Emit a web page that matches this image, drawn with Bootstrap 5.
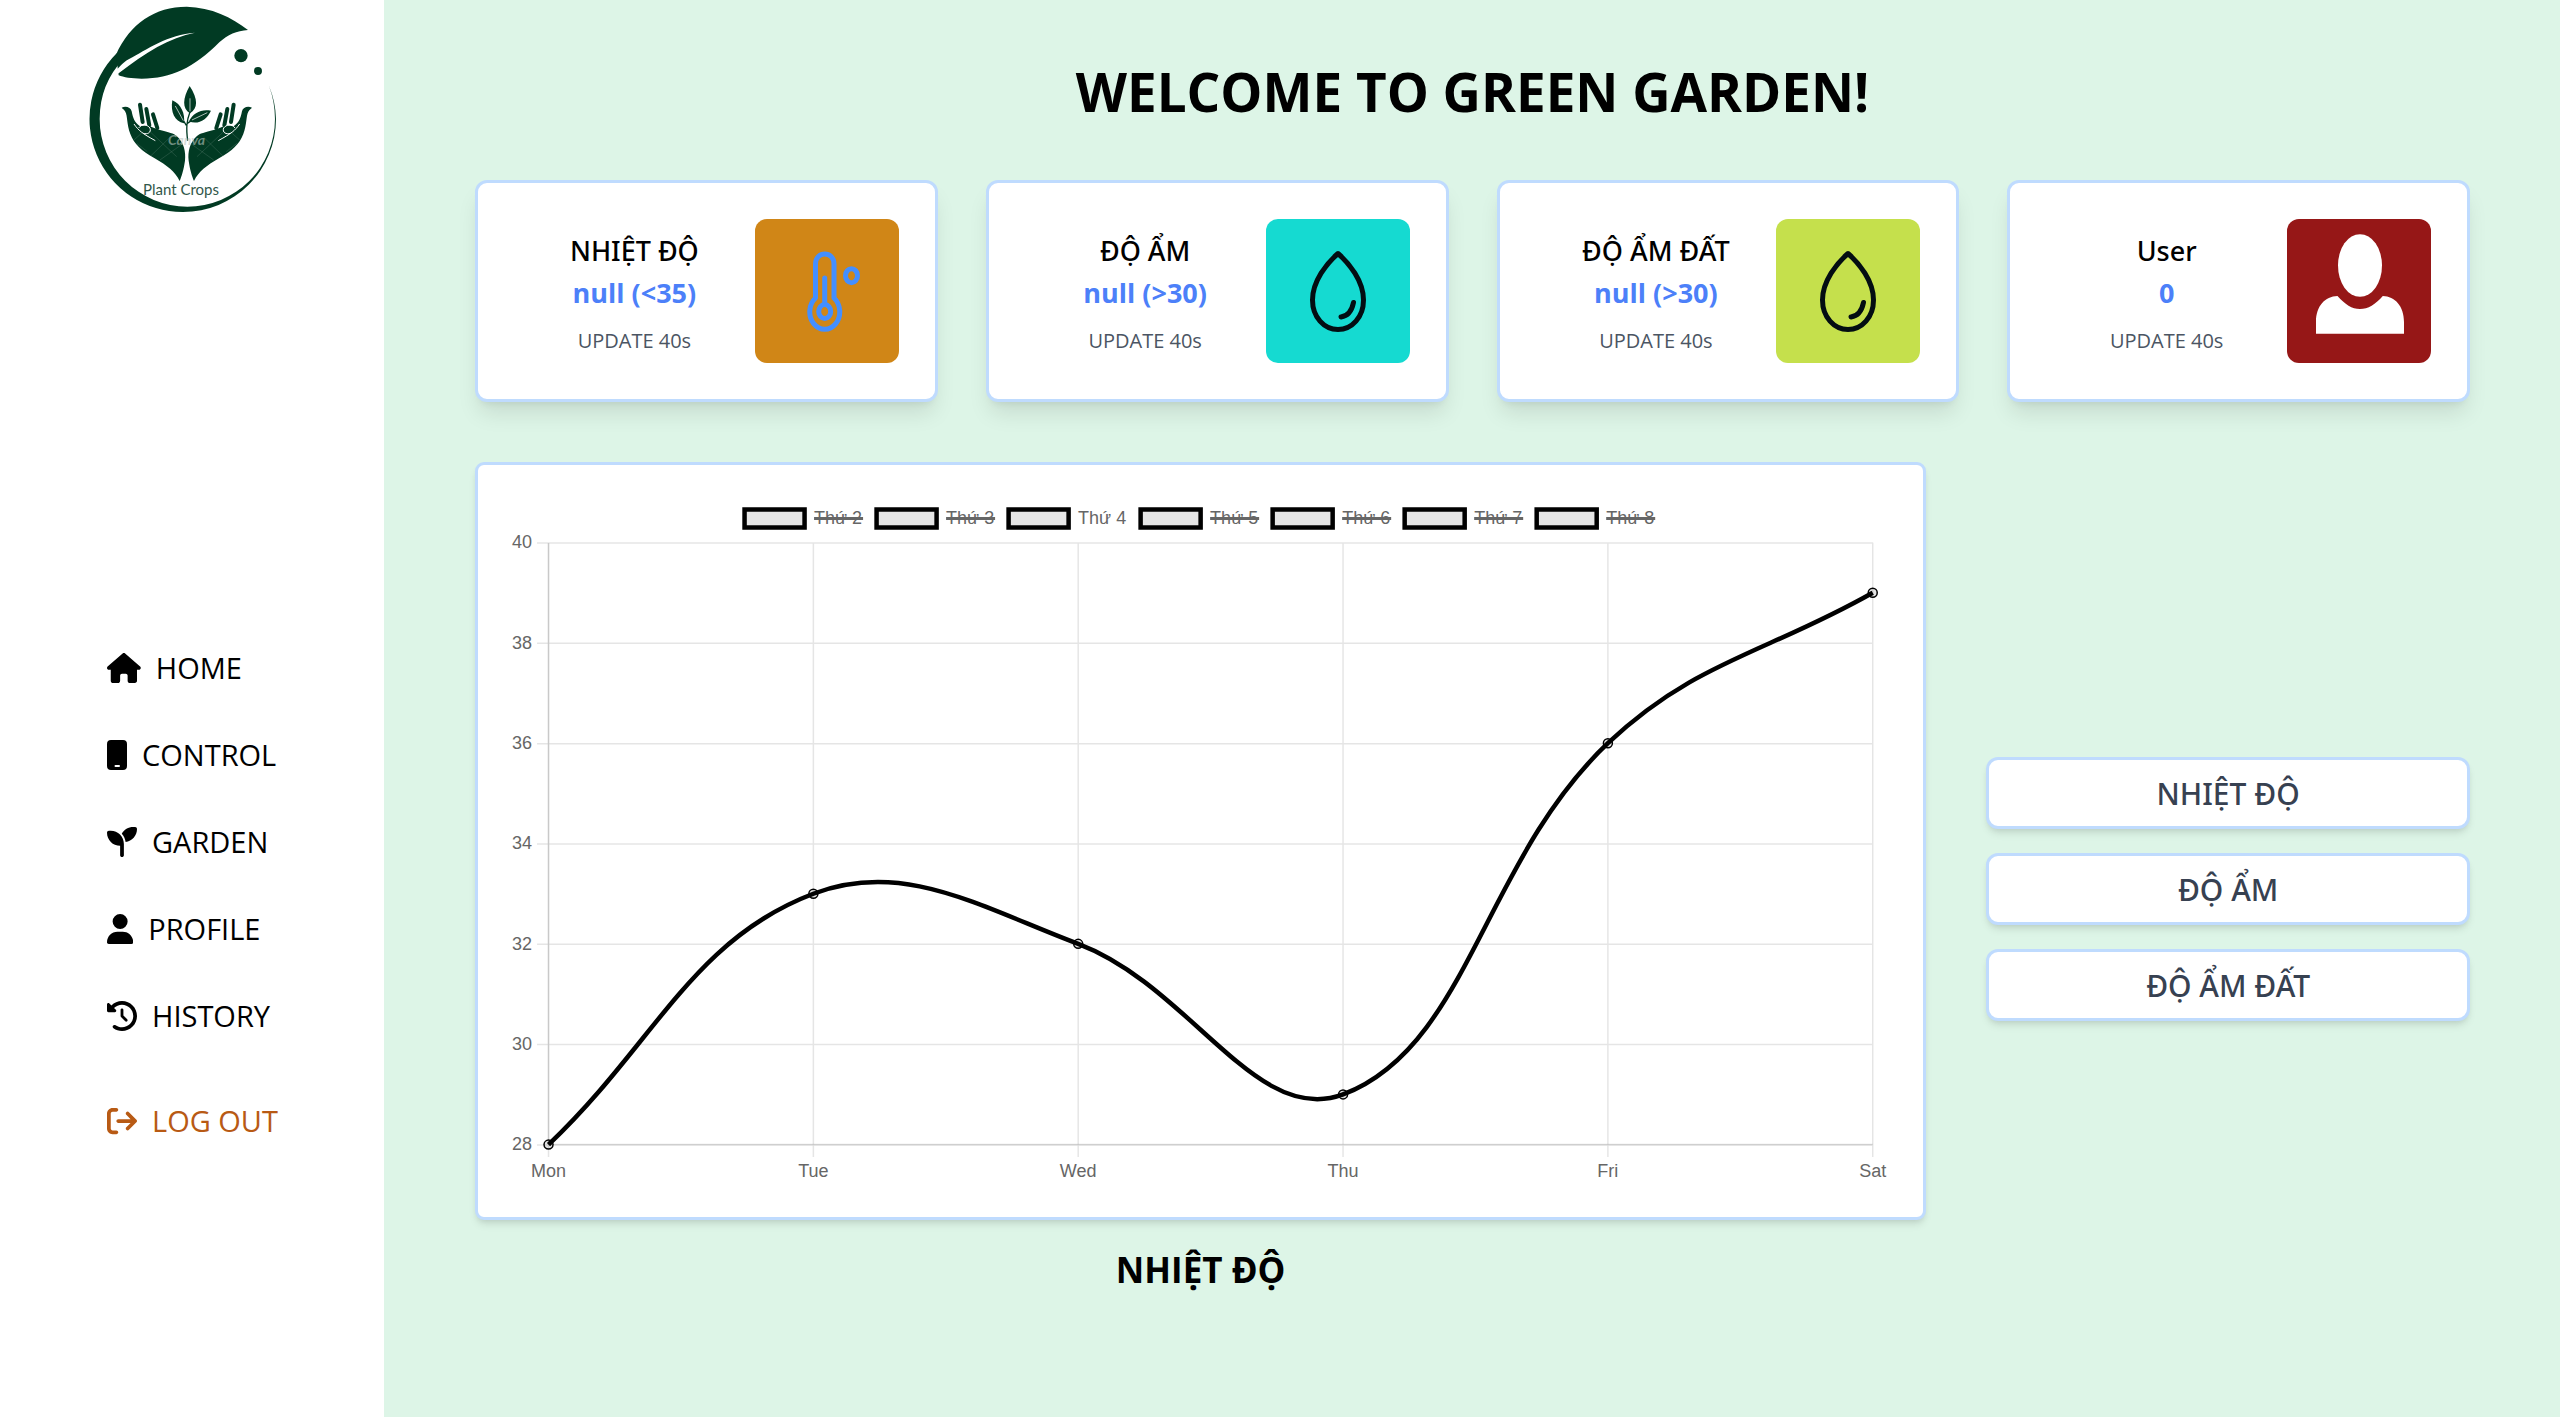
<!DOCTYPE html>
<html lang="vi">
<head>
<meta charset="utf-8">
<meta name="viewport" content="width=device-width, initial-scale=1">
<title>Green Garden</title>
<link href="https://cdn.jsdelivr.net/npm/bootstrap@5.3.0/dist/css/bootstrap.min.css" rel="stylesheet">
<style>
  :root { --edge: #bfdbfe; --mint: #ddf5e7; }
  body { font-family: "Open Sans", "Noto Sans", sans-serif; color: #000; background: var(--mint); }
  .side-panel { width: 15%; }
  .side-logo { width: 260px; height: 230px; margin-left: 60px; }
  .side-menu { margin-top: 415px; padding-left: 107px; gap: 42px; }
  .side-menu a { font-size: 29px; line-height: 45px; gap: 15px; color: #000; }
  .side-menu svg { height: 30px; width: auto; fill: currentColor; }
  .side-menu .exit-item { margin-top: 18px; }
  .side-menu .exit-item a { color: #b85a14; }
  .content-area { padding: 56px 90px 48px 91px; }
  .page-title { font-size: 53px; line-height: 72px; margin-bottom: 52px; }
  .panel { background: #fff; border: 3px solid var(--edge); border-radius: 12px; }
  .stat-row { gap: 48px; margin-bottom: 60px; }
  .stat-box { flex: 1 1 0; padding: 36px; box-shadow: 0 15px 22px -4px rgba(0,0,0,.1), 0 6px 9px -6px rgba(0,0,0,.1); }
  .stat-text { padding-top: 4px; }
  .stat-name, .stat-value { font-size: 27px; line-height: 42px; }
  .stat-name, .switch-btn { font-family: "Noto Sans", "Open Sans", sans-serif; font-weight: 500; }
  .stat-value { color: #4c80f9; }
  .stat-note { font-size: 20px; line-height: 30px; margin-top: 12px; color: #4b5563; }
  .stat-tile { width: 144px; height: 144px; border-radius: 12px; }
  .tile-orange { background: #d08617; }
  .tile-teal { background: #15dad1; }
  .tile-lime { background: #c5e04c; }
  .tile-red { background: #961717; }
  .chart-row { gap: 60px; }
  .chart-col { flex: 3 1 0; }
  .switch-col { flex: 1 1 0; gap: 24px; }
  .chart-panel { padding: 30px; border-radius: 9px; }
  .chart-panel, .switch-btn { box-shadow: 0 6px 9px -2px rgba(0,0,0,.1), 0 3px 6px -3px rgba(0,0,0,.1); }
  .chart-panel svg { font-family: "Liberation Sans", Arial, sans-serif; font-size: 18px; fill: #666; }
  .chart-title { font-size: 35px; line-height: 48px; margin: 26px 0 22px; }
  .switch-btn { height: 72px; font-size: 30px; color: #374151; padding: 2px 0 0; line-height: 42px; }
</style>
<script src="https://cdn.jsdelivr.net/npm/bootstrap@5.3.0/dist/js/bootstrap.bundle.min.js"></script>
</head>
<body>
<div class="d-flex min-vh-100">

  <aside class="side-panel bg-white flex-shrink-0">
    <svg class="side-logo d-block" viewBox="0 0 260 230" role="img" aria-label="Plant Crops">
      <defs>
        <g id="hand">
          <path d="M185 323C198 317 212 322 215 334C219 355 224 368 240 379C262 372 275 383 300 390C325 396 343 401 350 408C372 428 378 455 375 482C371 510 365 528 359 543C345 515 322 497 284 475C244 452 222 432 211 402C200 372 203 347 196 335C193 329 189 327 185 323Z"/>
          <path d="M240 314L248 366M259 327L268 376M279 343L292 384" stroke="#013a23" stroke-width="12" stroke-linecap="round" fill="none"/>
          <path d="M222 372C236 392 246 400 286 422M236 384C246 370 262 374 270 384C275 398 262 404 250 400" stroke="#fff" stroke-width="3" fill="none"/>
          <path d="M222 420L250 395M270 470L330 412M270 395L350 470M300 480L370 430M230 430L262 455" stroke="#fff" stroke-opacity=".18" stroke-width="2" fill="none"/>
        </g>
      </defs>
      <g transform="scale(.3333)" fill="#013a23">
        <path d="M170 160A279 279 0 0 0 369 636A279 279 0 0 0 648 357Q647 305 627 258Q645 305 645 357A263 263 0 0 1 119 357A263 263 0 0 1 190 177Z"/>
        <path d="M168 164C210 70 285 20 380 20C455 22 515 52 564 90C530 92 503 104 478 127C400 204 335 236 245 236C215 236 190 232 176 226Z"/>
        <path d="M405 98C330 112 255 158 176 220L160 226C172 205 188 188 206 178C260 148 325 103 405 98Z" fill="#fff"/>
        <circle cx="543" cy="167" r="20"/><circle cx="594" cy="213" r="12"/>
        <use href="#hand"/>
        <use href="#hand" transform="translate(761 0) scale(-1 1)"/>
        <path d="M389 258C415 298 414 325 390 340C366 325 368 295 389 258ZM337 301C364 312 376 342 372 370C344 364 331 336 337 301ZM453 332C426 326 398 338 387 364C414 375 440 360 453 332Z"/>
        <path d="M390 336C380 362 378 382 383 422M360 345L379 376M420 345L382 370" stroke="#013a23" stroke-width="4" fill="none"/>
        <path d="M390 295V334M346 318L370 362M442 338L396 360" stroke="#fff" stroke-width="2" fill="none"/>
      </g>
      <text x="108" y="145" font-family="Lato, sans-serif" font-style="italic" font-weight="700" font-size="14" fill="#b9c6bf" fill-opacity=".6">Canva</text>
      <text x="83" y="195" font-family="Lato, sans-serif" font-size="15" fill="#31574a">Plant Crops</text>
    </svg>

    <nav aria-label="Menu">
      <ul class="side-menu list-unstyled d-flex flex-column mb-0">
        <li><a href="#" class="d-inline-flex align-items-center text-decoration-none"><svg viewBox="0 0 576 512" aria-hidden="true"><path d="M575.8 255.5c0 18-15 32.1-32 32.1l-32 0 .7 160.2c0 2.7-.2 5.4-.5 8.1l0 16.2c0 22.1-17.9 40-40 40l-16 0c-1.1 0-2.2 0-3.3-.1c-1.4 .1-2.8 .1-4.2 .1L416 512l-24 0c-22.1 0-40-17.9-40-40l0-24 0-64c0-17.7-14.3-32-32-32l-64 0c-17.7 0-32 14.3-32 32l0 64 0 24c0 22.1-17.9 40-40 40l-24 0-31.9 0c-1.5 0-3-.1-4.5-.2c-1.2 .1-2.4 .2-3.6 .2l-16 0c-22.1 0-40-17.9-40-40l0-112c0-.9 0-1.9 .1-2.8l0-69.7-32 0c-18 0-32-14-32-32.1c0-9 3-17 10-24L266.4 8c7-7 15-8 22-8s15 2 21 7L564.8 231.5c8 7 12 15 11 24z"/></svg>HOME</a></li>
        <li><a href="#" class="d-inline-flex align-items-center text-decoration-none"><svg viewBox="0 0 20 30" aria-hidden="true"><path fill-rule="evenodd" d="M4 0H16A4 4 0 0 1 20 4V26A4 4 0 0 1 16 30H4A4 4 0 0 1 0 26V4A4 4 0 0 1 4 0ZM8.500 25A1 1 0 0 0 8.500 27H12A1 1 0 0 0 12 25Z"/></svg>CONTROL</a></li>
        <li><a href="#" class="d-inline-flex align-items-center text-decoration-none"><svg viewBox="0 0 512 512" aria-hidden="true"><path d="M512 32c0 113.6-84.6 207.5-194.2 222c-7.1-53.4-30.6-101.6-65.3-139.3C290.8 46.3 364 0 448 0h32c17.7 0 32 14.3 32 32zM0 96C0 78.3 14.3 64 32 64H64c123.700 0 224 100.300 224 224v32V480c0 17.700-14.300 32-32 32s-32-14.300-32-32V320C100.300 320 0 219.700 0 96z"/></svg>GARDEN</a></li>
        <li><a href="#" class="d-inline-flex align-items-center text-decoration-none"><svg viewBox="0 0 448 512" aria-hidden="true"><path d="M224 256A128 128 0 1 0 224 0a128 128 0 1 0 0 256zm-45.700 48C79.800 304 0 383.800 0 482.300C0 498.700 13.300 512 29.700 512H418.300c16.400 0 29.700-13.300 29.700-29.700C448 383.800 368.200 304 269.700 304H178.300z"/></svg>PROFILE</a></li>
        <li><a href="#" class="d-inline-flex align-items-center text-decoration-none"><svg viewBox="0 0 512 512" aria-hidden="true"><path d="M75 75L41 41C25.900 25.900 0 36.600 0 57.900V168c0 13.300 10.700 24 24 24H134.100c21.400 0 32.100-25.900 17-41l-30.800-30.800C155 85.500 203 64 256 64c106 0 192 86 192 192s-86 192-192 192c-40.800 0-78.600-12.700-109.700-34.400c-14.500-10.100-34.400-6.600-44.600 7.900s-6.600 34.400 7.900 44.600C151.200 495 201.700 512 256 512c141.400 0 256-114.600 256-256S397.400 0 256 0C185.300 0 121.300 28.700 75 75zm181 53c-13.300 0-24 10.700-24 24V256c0 6.400 2.500 12.500 7 17l72 72c9.400 9.400 24.600 9.400 33.900 0s9.400-24.600 0-33.900l-65-65V152c0-13.300-10.700-24-24-24z"/></svg>HISTORY</a></li>
        <li class="exit-item"><a href="#" class="d-inline-flex align-items-center text-decoration-none"><svg viewBox="0 0 512 512" aria-hidden="true"><path d="M502.600 278.600c12.500-12.500 12.500-32.800 0-45.300l-128-128c-12.500-12.500-32.800-12.500-45.300 0s-12.500 32.800 0 45.300L402.700 224 192 224c-17.700 0-32 14.300-32 32s14.300 32 32 32l210.700 0-73.400 73.400c-12.500 12.500-12.500 32.800 0 45.300s32.800 12.500 45.300 0l128-128zM160 96c17.700 0 32-14.300 32-32s-14.300-32-32-32L96 32C43 32 0 75 0 128L0 384c0 53 43 96 96 96l64 0c17.700 0 32-14.300 32-32s-14.300-32-32-32l-64 0c-17.700 0-32-14.300-32-32l0-256c0-17.700 14.300-32 32-32l64 0z"/></svg>LOG OUT</a></li>
      </ul>
    </nav>
  </aside>

  <main class="content-area flex-grow-1">
    <h1 class="page-title fw-bold text-center">WELCOME TO GREEN GARDEN!</h1>

    <section class="stat-row d-flex">
      <article class="stat-box panel d-flex align-items-center">
        <div class="stat-text flex-grow-1 text-center">
          <h2 class="stat-name m-0">NHIỆT ĐỘ</h2>
          <div class="stat-value fw-bold">null (&lt;35)</div>
          <div class="stat-note">UPDATE 40s</div>
        </div>
        <svg class="stat-tile tile-orange flex-shrink-0" viewBox="0 0 144 144" fill="none" stroke="#448fff" stroke-width="5" stroke-linecap="round" stroke-linejoin="round" aria-hidden="true">
          <path d="M60.500 79V45C60.500 31.700 79 31.700 79 45V79A15 17.500 0 1 1 60.500 79Z"/>
          <path d="M69.700 59V85"/><ellipse cx="69.700" cy="92.500" rx="6" ry="7"/><ellipse cx="96.500" cy="56.700" rx="6" ry="7"/>
        </svg>
      </article>
      <article class="stat-box panel d-flex align-items-center">
        <div class="stat-text flex-grow-1 text-center">
          <h2 class="stat-name m-0">ĐỘ ẨM</h2>
          <div class="stat-value fw-bold">null (&gt;30)</div>
          <div class="stat-note">UPDATE 40s</div>
        </div>
        <svg class="stat-tile tile-teal flex-shrink-0" viewBox="0 0 144 144" fill="none" stroke="#030d12" stroke-width="5" stroke-linecap="round" stroke-linejoin="round" aria-hidden="true">
          <path d="M72 34.500C61 44 46.500 62 46.500 81C46.500 98 58 110.500 72 110.500S97.500 98 97.500 81C97.500 62 83 44 72 34.500Z"/><path d="M87.500 83.500C86 91 82 97 75 98"/>
        </svg>
      </article>
      <article class="stat-box panel d-flex align-items-center">
        <div class="stat-text flex-grow-1 text-center">
          <h2 class="stat-name m-0">ĐỘ ẨM ĐẤT</h2>
          <div class="stat-value fw-bold">null (&gt;30)</div>
          <div class="stat-note">UPDATE 40s</div>
        </div>
        <svg class="stat-tile tile-lime flex-shrink-0" viewBox="0 0 144 144" fill="none" stroke="#030d12" stroke-width="5" stroke-linecap="round" stroke-linejoin="round" aria-hidden="true">
          <path d="M72 34.500C61 44 46.500 62 46.500 81C46.500 98 58 110.500 72 110.500S97.500 98 97.500 81C97.500 62 83 44 72 34.500Z"/><path d="M87.500 83.500C86 91 82 97 75 98"/>
        </svg>
      </article>
      <article class="stat-box panel d-flex align-items-center">
        <div class="stat-text flex-grow-1 text-center">
          <h2 class="stat-name m-0">User</h2>
          <div class="stat-value fw-bold">0</div>
          <div class="stat-note">UPDATE 40s</div>
        </div>
        <svg class="stat-tile tile-red flex-shrink-0" viewBox="0 0 144 144" fill="#fff" aria-hidden="true">
          <ellipse cx="73" cy="46.500" rx="22" ry="31.300"/>
          <path d="M29 114.700V103C29 87 38 77.500 50.500 77C58 85.500 65 90 73 90S88.500 85.500 95.800 77C108 77.500 117 87 117 103V114.700Z"/>
        </svg>
      </article>
    </section>

    <section class="chart-row d-flex">
      <div class="chart-col">
        <div class="chart-panel panel">
          <svg class="d-block w-100" viewBox="0 0 1385 692" role="img" aria-label="NHIỆT ĐỘ">
            <!-- legend -->
            <g fill="#e5e5e5" stroke="#000" stroke-width="4.500">
              <rect x="236.500" y="14.500" width="60" height="18"/><rect x="368.500" y="14.500" width="60" height="18"/><rect x="500.500" y="14.500" width="60" height="18"/><rect x="632.500" y="14.500" width="60" height="18"/><rect x="764.500" y="14.500" width="60" height="18"/><rect x="896.500" y="14.500" width="60" height="18"/><rect x="1028.500" y="14.500" width="60" height="18"/>
            </g>
            <g>
              <text x="306" y="29">Thứ 2</text><text x="438" y="29">Thứ 3</text><text x="570" y="29">Thứ 4</text><text x="702" y="29">Thứ 5</text><text x="834" y="29">Thứ 6</text><text x="966" y="29">Thứ 7</text><text x="1098" y="29">Thứ 8</text>
            </g>
            <path d="M306 23.500h49M438 23.500h49M702 23.500h49M834 23.500h49M966 23.500h49M1098 23.500h49" stroke="#666" stroke-width="3"/>
            <!-- grid -->
            <path fill="none" stroke="#000" stroke-opacity=".1" stroke-width="1.500" d="M29 48H1365M29 148.300H1365M29 248.600H1365M29 348.900H1365M29 449.200H1365M29 549.500H1365M29 649.800H1365M40.500 48V662M305.300 48V662M570.100 48V662M834.900 48V662M1099.700 48V662M1364.500 48V662"/>
            <path fill="none" stroke="#000" stroke-opacity=".12" stroke-width="1.500" d="M40.500 48V649.500H1364.500"/>
            <g text-anchor="end">
              <text x="24" y="53">40</text><text x="24" y="154">38</text><text x="24" y="254">36</text><text x="24" y="354">34</text><text x="24" y="455">32</text><text x="24" y="555">30</text><text x="24" y="655">28</text>
            </g>
            <g text-anchor="middle">
              <text x="40.500" y="682">Mon</text><text x="305.300" y="682">Tue</text><text x="570.100" y="682">Wed</text><text x="834.900" y="682">Thu</text><text x="1099.700" y="682">Fri</text><text x="1364.500" y="682">Sat</text>
            </g>
            <!-- series -->
            <path fill="none" stroke="#000" stroke-width="4.500" d="M40.500 649.500C146.400 549.200 183.500 444.900 305.300 398.700C395.300 364.600 470.600 411.100 570.100 448.800C682.500 491.400 748.200 632.100 834.900 599.300C960 551.900 974.600 366.700 1099.700 248.200C1186.400 166.100 1258.600 157.900 1364.500 97.700"/>
            <g fill="#000" fill-opacity=".1" stroke="#000" stroke-width="1.500">
              <circle cx="40.500" cy="649.500" r="4.500"/><circle cx="305.300" cy="398.700" r="4.500"/><circle cx="570.100" cy="448.800" r="4.500"/><circle cx="834.900" cy="599.300" r="4.500"/><circle cx="1099.700" cy="248.200" r="4.500"/><circle cx="1364.500" cy="97.700" r="4.500"/>
            </g>
          </svg>
        </div>
        <h2 class="chart-title fw-bold text-center">NHIỆT ĐỘ</h2>
      </div>
      <div class="switch-col d-flex flex-column justify-content-center">
        <button type="button" class="switch-btn panel w-100">NHIỆT ĐỘ</button>
        <button type="button" class="switch-btn panel w-100">ĐỘ ẨM</button>
        <button type="button" class="switch-btn panel w-100">ĐỘ ẨM ĐẤT</button>
      </div>
    </section>
  </main>
</div>
</body>
</html>
